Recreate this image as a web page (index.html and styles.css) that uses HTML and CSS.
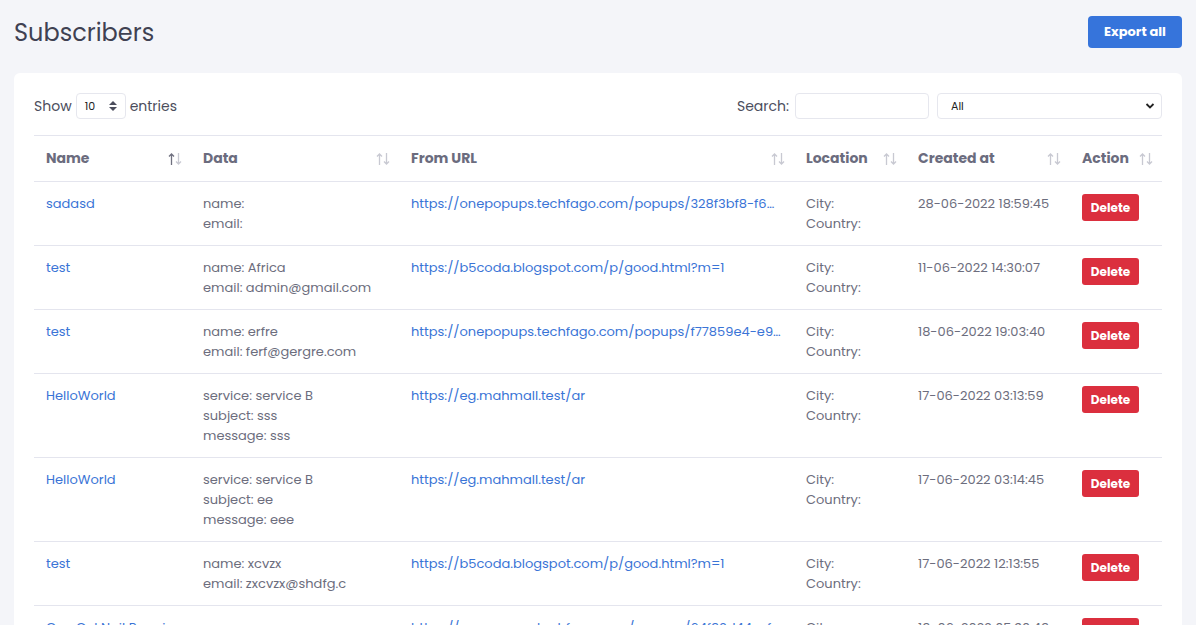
FILE: index.html
```html
<!DOCTYPE html>
<html lang="en">
<head>
    <meta charset="UTF-8">
    <meta name="viewport" content="width=device-width, initial-scale=1.0">
    <title>Subscribers</title>
    <link rel="stylesheet" href="styles.css">
</head>
<body>

<div class="page-head">
    <h1 class="page-title">Subscribers</h1>
    <button class="btn-export">Export all</button>
</div>

<div class="card">
    <div class="controls">
        <div class="length">
            Show
            <span class="length-select">10
                <svg width="8" height="10" viewBox="0 0 8 10"><path d="M4 0L8 4H0z M4 10L0 6H8z" fill="#4b4d5c"/></svg>
            </span>
            entries
        </div>
        <div class="filters">
            <label class="search">Search: <input type="text"></label>
            <div class="type-select">All
                <svg width="10" height="8" viewBox="0 0 10 8"><path d="M1.5 2L5 5.5L8.5 2" fill="none" stroke="#222" stroke-width="1.8"/></svg>
            </div>
        </div>
    </div>

    <table class="subs">
        <colgroup>
            <col style="width: 157px">
            <col style="width: 208px">
            <col style="width: 395px">
            <col style="width: 112px">
            <col style="width: 164px">
            <col style="width: 92px">
        </colgroup>
        <thead>
            <tr>
                <th><div class="th-in">Name <span class="sort active"></span></div></th>
                <th><div class="th-in">Data <span class="sort"></span></div></th>
                <th><div class="th-in">From URL <span class="sort"></span></div></th>
                <th><div class="th-in">Location <span class="sort"></span></div></th>
                <th><div class="th-in">Created at <span class="sort"></span></div></th>
                <th><div class="th-in">Action <span class="sort"></span></div></th>
            </tr>
        </thead>
        <tbody id="rows"></tbody>
    </table>
</div>

<script>
    const rows = [
        ['sadasd', ['name:', 'email:'], 'https://onepopups.techfago.com/popups/328f3bf8-f6…', '28-06-2022 18:59:45'],
        ['test', ['name: Africa', 'email: admin@gmail.com'], 'https://b5coda.blogspot.com/p/good.html?m=1', '11-06-2022 14:30:07'],
        ['test', ['name: erfre', 'email: ferf@gergre.com'], 'https://onepopups.techfago.com/popups/f77859e4-e9…', '18-06-2022 19:03:40'],
        ['HelloWorld', ['service: service B', 'subject: sss', 'message: sss'], 'https://eg.mahmall.test/ar', '17-06-2022 03:13:59'],
        ['HelloWorld', ['service: service B', 'subject: ee', 'message: eee'], 'https://eg.mahmall.test/ar', '17-06-2022 03:14:45'],
        ['test', ['name: xcvzx', 'email: zxcvzx@shdfg.c'], 'https://b5coda.blogspot.com/p/good.html?m=1', '17-06-2022 12:13:55'],
        ['One Gel Nail Repair', ['name:', 'email:'], 'https://onepopups.techfago.com/popups/64f92d44-cf…', '19-06-2022 05:30:49']
    ];

    const body = document.getElementById('rows');
    rows.forEach(r => {
        const tr = document.createElement('tr');
        tr.innerHTML =
            '<td><a href="#">' + r[0] + '</a></td>' +
            '<td>' + r[1].join('<br>') + '</td>' +
            '<td class="url"><a href="#">' + r[2] + '</a></td>' +
            '<td>City:<br>Country:</td>' +
            '<td>' + r[3] + '</td>' +
            '<td><button class="btn-delete">Delete</button></td>';
        body.appendChild(tr);
    });
</script>

</body>
</html>
```

FILE: styles.css
```css
body {
    margin: 0;
    padding: 16px 14px;
    background-color: #f4f5f9;
    font-family: 'Poppins', 'Open Sans', sans-serif;
    font-size: 13px;
    color: #6c6d7d;
}

.page-head {
    display: flex;
    justify-content: space-between;
    align-items: center;
    height: 32px;
}

.page-title {
    margin: 0;
    font-size: 24px;
    font-weight: 400;
    color: #3f4152;
}

.btn-export {
    height: 32px;
    width: 94px;
    border: none;
    border-radius: 4px;
    background-color: #3674db;
    color: #fff;
    font-family: inherit;
    font-size: 13px;
    font-weight: 700;
}

.card {
    margin-top: 25px;
    background-color: #fff;
    border-radius: 6px;
    padding: 20px;
}

.controls {
    display: flex;
    justify-content: space-between;
    align-items: center;
    height: 26px;
    margin-bottom: 16px;
    color: #4b4d5c;
    font-size: 14px;
}

.length {
    display: flex;
    align-items: center;
    gap: 4px;
}

.length-select {
    display: inline-flex;
    align-items: center;
    justify-content: space-between;
    box-sizing: border-box;
    width: 50px;
    height: 26px;
    padding: 0 8px 0 8px;
    border: 1px solid #e6e7ee;
    border-radius: 4px;
    font-size: 11px;
    color: #222;
}

.filters {
    display: flex;
    align-items: center;
    gap: 8px;
}

.search {
    display: flex;
    align-items: center;
    gap: 6px;
}

.search input {
    box-sizing: border-box;
    width: 134px;
    height: 26px;
    border: 1px solid #e6e7ee;
    border-radius: 4px;
}

.type-select {
    display: flex;
    align-items: center;
    justify-content: space-between;
    box-sizing: border-box;
    width: 225px;
    height: 26px;
    padding: 0 6px 0 13px;
    border: 1px solid #e6e7ee;
    border-radius: 4px;
    font-size: 11px;
    color: #222;
}

.subs {
    width: 100%;
    table-layout: fixed;
    border-collapse: collapse;
    border-top: 1px solid #e4e5ee;
}

.subs th {
    height: 45px;
    padding: 0 9px 0 12px;
    border-bottom: 1px solid #e4e5ee;
    text-align: left;
    font-size: 14px;
    font-weight: 700;
    color: #6b6c7e;
}

.th-in {
    display: flex;
    justify-content: space-between;
    align-items: center;
}

.sort {
    width: 14px;
    height: 14px;
    background-image: url("data:image/svg+xml,%3Csvg xmlns='http://www.w3.org/2000/svg' width='14' height='14'%3E%3Cpath d='M3.5 13V2M1 4.5L3.5 2L6 4.5' fill='none' stroke='%23c8c9d2' stroke-width='1.3'/%3E%3Cpath d='M10.5 1V12M8 9.5L10.5 12L13 9.5' fill='none' stroke='%23c8c9d2' stroke-width='1.3'/%3E%3C/svg%3E");
}

.sort.active {
    background-image: url("data:image/svg+xml,%3Csvg xmlns='http://www.w3.org/2000/svg' width='14' height='14'%3E%3Cpath d='M3.5 13V2M1 4.5L3.5 2L6 4.5' fill='none' stroke='%23707180' stroke-width='1.3'/%3E%3Cpath d='M10.5 1V12M8 9.5L10.5 12L13 9.5' fill='none' stroke='%23c8c9d2' stroke-width='1.3'/%3E%3C/svg%3E");
}

.subs td {
    padding: 12px 12px 11px;
    line-height: 20px;
    vertical-align: top;
    border-bottom: 1px solid #e4e5ee;
}

.subs a {
    color: #3a74d6;
    text-decoration: none;
}

.subs td.url {
    white-space: nowrap;
    overflow: hidden;
    text-overflow: ellipsis;
}

.btn-delete {
    display: block;
    width: 57px;
    height: 27px;
    border: none;
    border-radius: 3px;
    background-color: #db2f3e;
    color: #fff;
    font-family: inherit;
    font-size: 12px;
    font-weight: 700;
}
```
